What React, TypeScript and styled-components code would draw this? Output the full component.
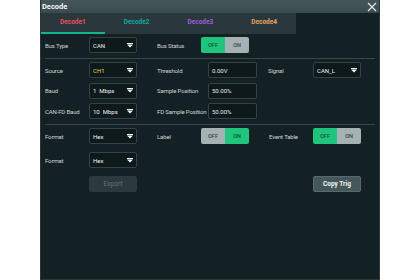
import React from 'react';
import styled, { createGlobalStyle } from 'styled-components';

const GlobalStyle = createGlobalStyle`
  html, body {
    margin: 0;
    padding: 0;
    background: #ffffff;
  }
  body {
    font-family: Roboto, "Liberation Sans", sans-serif;
  }
`

type Tone = 'red' | 'teal' | 'purple' | 'orange'

const toneColors: Record<Tone, string> = {
  red: '#e8515b',
  teal: '#11a7a2',
  purple: '#9a5ed2',
  orange: '#e3a566',
}

const tabs: { name: string, tone: Tone }[] = [
  { name: 'Decode1', tone: 'red' },
  { name: 'Decode2', tone: 'teal' },
  { name: 'Decode3', tone: 'purple' },
  { name: 'Decode4', tone: 'orange' },
]

const Arrow = () => (
  <svg width="6" height="5" viewBox="0 0 6 5">
    <rect x="0" y="0" width="6" height="1" fill="#f2f5f5" />
    <polygon points="0,1.6 6,1.6 3,4.6" fill="#f2f5f5" />
  </svg>
)

const Select = ({ value, accent }: { value: string, accent?: boolean }) => (
  <SelectBox>
    <SelectValue accent={accent ? 1 : 0}>{value}</SelectValue>
    <Arrow />
  </SelectBox>
)

const Toggle = ({ on }: { on: boolean }) => (
  <ToggleBox>
    <ToggleHalf active={!on ? 1 : 0}>OFF</ToggleHalf>
    <ToggleHalf active={on ? 1 : 0}>ON</ToggleHalf>
  </ToggleBox>
)

const App = () => {
  return (
    <>
      <GlobalStyle />
      <Page>
        <Panel>
          <TitleBar>
            <Title>Decode</Title>
            <svg width="10" height="10" viewBox="0 0 10 10">
              <path d="M1 1 L9 9 M9 1 L1 9" stroke="#dfe6e6" strokeWidth="1.2" />
            </svg>
          </TitleBar>
          <TabStrip>
            {tabs.map((t, i) => (
              <Tab key={t.name} tone={t.tone} active={i === 0 ? 1 : 0}>{t.name}</Tab>
            ))}
          </TabStrip>
          <Body>
            <Group spacing={0}>
              <Row>
                <Label>Bus Type</Label>
                <Select value="CAN" />
                <Label indent={20}>Bus Status</Label>
                <Toggle on={false} />
              </Row>
            </Group>
            <Divider />
            <Group spacing={4.7}>
              <Row>
                <Label>Source</Label>
                <Select value="CH1" accent />
                <Label indent={20}>Threshold</Label>
                <Field>0.00V</Field>
                <Label indent={11}>Signal</Label>
                <Select value="CAN_L" />
              </Row>
              <Row>
                <Label>Baud</Label>
                <Select value="1  Mbps" />
                <Label indent={20}>Sample Position</Label>
                <Field>50.00%</Field>
              </Row>
              <Row>
                <Label>CAN-FD Baud</Label>
                <Select value="10  Mbps" />
                <Label indent={20}>FD Sample Position</Label>
                <Field>50.00%</Field>
              </Row>
            </Group>
            <Divider />
            <Group spacing={8}>
              <Row>
                <Label>Format</Label>
                <Select value="Hex" />
                <Label indent={20}>Label</Label>
                <Toggle on />
                <Label indent={12}>Event Table</Label>
                <Toggle on={false} />
              </Row>
              <Row>
                <Label>Format</Label>
                <Select value="Hex" />
              </Row>
              <Row>
                <span />
                <Button disabled>Export</Button>
                <span />
                <span />
                <span />
                <Button>Copy Trig</Button>
              </Row>
            </Group>
          </Body>
        </Panel>
      </Page>
    </>
  )
}

const Page = styled.div`
  width: 420px;
  height: 280px;
  display: flex;
  justify-content: center;
`

const Panel = styled.div`
  width: 340px;
  height: 280px;
  box-sizing: border-box;
  background: #132024;
  border-left: 1px solid #2a3739;
  border-right: 1px solid #2a3739;
  border-bottom: 1px solid #2a3739;
  display: flex;
  flex-direction: column;
`

const TitleBar = styled.div`
  height: 13px;
  background: linear-gradient(#45565a, #3b4a4e);
  display: flex;
  align-items: center;
  justify-content: space-between;
  padding: 0 2px 0 1px;
`

const Title = styled.span`
  color: #f4f7f7;
  font-size: 7.5px;
  font-weight: 700;
`

const TabStrip = styled.div`
  height: 21px;
  display: flex;
`

const Tab = styled.div<{ tone: Tone, active: 0 | 1 }>`
  width: 63.75px;
  box-sizing: border-box;
  background: #2a383c;
  color: ${props => toneColors[props.tone]};
  font-size: 6.5px;
  font-weight: 700;
  display: flex;
  align-items: center;
  justify-content: center;
  padding-bottom: 1px;
  border-bottom: 2px solid ${props => props.active ? '#12b58a' : '#2a383c'};
`

const Body = styled.div`
  padding: 3px 4px 0;
  display: flex;
  flex-direction: column;
`

const Group = styled.div<{ spacing: number }>`
  display: flex;
  flex-direction: column;
  gap: ${props => props.spacing}px;
`

const Divider = styled.div`
  height: 1px;
  background: #3a474a;
  margin: 4.5px 0 3.5px;
`

const Row = styled.div`
  height: 16px;
  display: grid;
  grid-template-columns: 44px 48px 64px 56px 56px 48px;
  align-items: center;
`

const Label = styled.span<{ indent?: number }>`
  padding-left: ${props => props.indent || 0}px;
  color: #cdd4d5;
  font-size: 6px;
  font-weight: 400;
  letter-spacing: -0.15px;
  white-space: nowrap;
`

const SelectBox = styled.div`
  height: 16px;
  box-sizing: border-box;
  background: #0e191c;
  border: 1px solid #354245;
  border-radius: 2px;
  display: flex;
  align-items: center;
  justify-content: space-between;
  padding: 0 3px 0 3px;
`

const SelectValue = styled.span<{ accent: 0 | 1 }>`
  color: ${props => props.accent ? '#e4d74a' : '#eef2f2'};
  font-size: 6px;
  font-weight: 400;
  white-space: pre;
`

const Field = styled.div`
  height: 16px;
  width: 49px;
  margin-left: 7px;
  box-sizing: border-box;
  background: #0e191c;
  border: 1px solid #354245;
  border-radius: 2px;
  display: flex;
  align-items: center;
  padding-left: 3px;
  color: #e3e9e9;
  font-size: 6px;
  font-weight: 400;
`

const ToggleBox = styled.div`
  width: 48px;
  height: 16px;
  border-radius: 2px;
  overflow: hidden;
  display: flex;
`

const ToggleHalf = styled.div<{ active: 0 | 1 }>`
  flex: 1;
  display: flex;
  align-items: center;
  justify-content: center;
  background: ${props => props.active ? '#1fc57d' : '#a5b1b3'};
  color: ${props => props.active ? '#0d5534' : '#34474b'};
  font-size: 5.5px;
  font-weight: 500;
`

const Button = styled.div<{ disabled?: boolean }>`
  height: 16px;
  box-sizing: border-box;
  border-radius: 2px;
  display: flex;
  align-items: center;
  justify-content: center;
  background: ${props => props.disabled ? '#2a3a3d' : '#46575a'};
  border: 1px solid ${props => props.disabled ? '#2a3a3d' : '#5a696c'};
  color: ${props => props.disabled ? '#65777a' : '#f2f5f5'};
  font-size: 6.5px;
  font-weight: ${props => props.disabled ? 400 : 700};
`

export default App;
